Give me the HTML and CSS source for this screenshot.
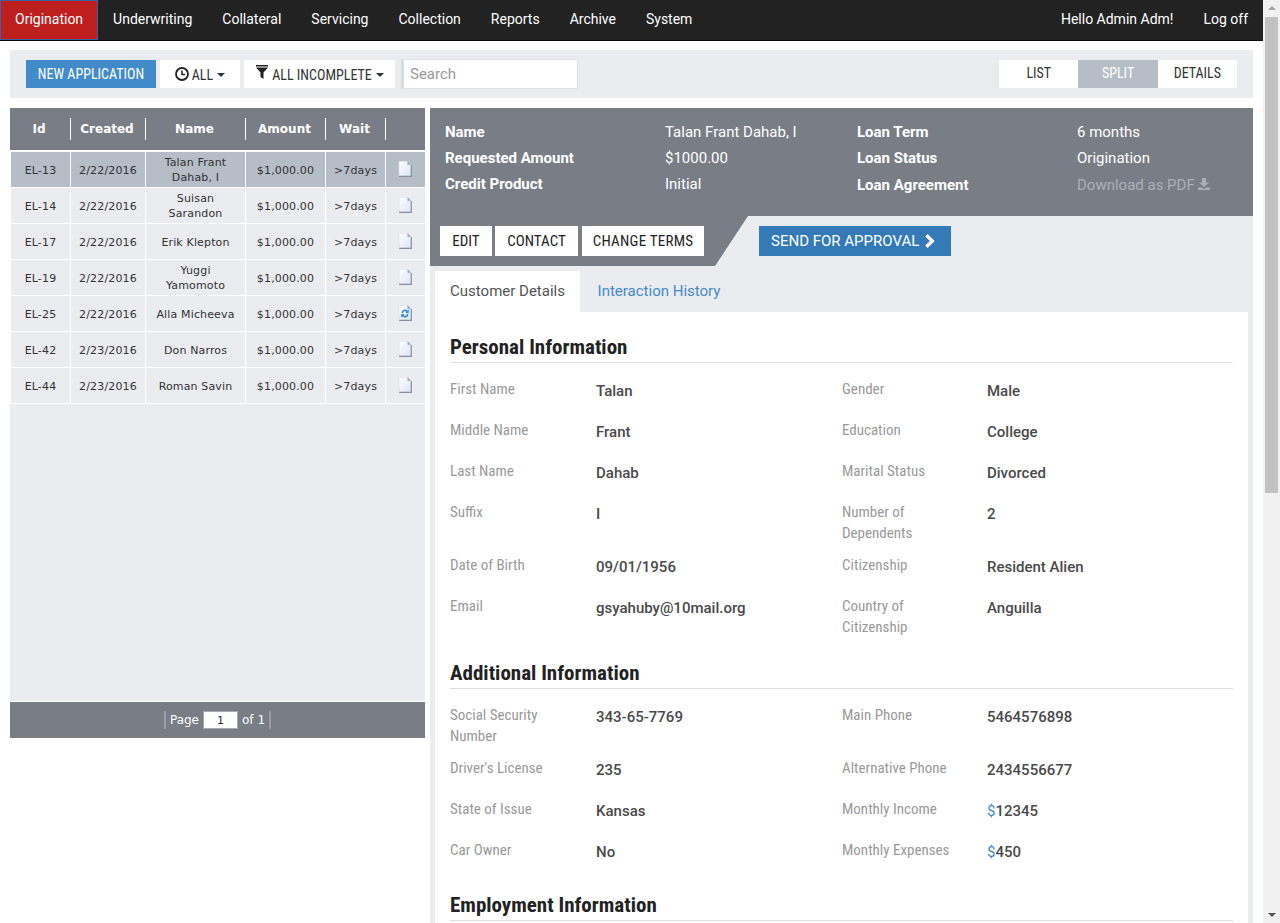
FILE: index.html
```html
<!DOCTYPE html>
<html lang="en">
<head>
<meta charset="utf-8">
<title>Origination</title>
<link rel="stylesheet" href="styles.css">
</head>
<body>
<div class="page">
  <nav class="navbar">
    <ul class="nav-list">
      <li class="nav-item active">Origination</li>
      <li class="nav-item">Underwriting</li>
      <li class="nav-item">Collateral</li>
      <li class="nav-item">Servicing</li>
      <li class="nav-item">Collection</li>
      <li class="nav-item">Reports</li>
      <li class="nav-item">Archive</li>
      <li class="nav-item">System</li>
    </ul>
    <ul class="nav-list">
      <li class="nav-item">Hello Admin Adm!</li>
      <li class="nav-item">Log off</li>
    </ul>
  </nav>
  <div class="toolbar">
    <button class="btn btn-new">NEW APPLICATION</button>
    <button class="btn btn-filter btn-all">
      <svg class="ico-clock" viewBox="0 0 14 14"><circle cx="7" cy="7" r="6" fill="none" stroke="#222" stroke-width="1.8"/><path d="M7 3.5V7.6H10" fill="none" stroke="#222" stroke-width="1.5"/></svg>
      ALL<span class="caret"></span>
    </button>
    <button class="btn btn-filter btn-incomplete">
      <svg class="ico-funnel" viewBox="0 0 12 14"><path d="M0 0H12V1.5H0ZM0 2.5H12L7.5 7.5V14L4.5 12V7.5Z" fill="#222"/></svg>
      ALL INCOMPLETE<span class="caret"></span>
    </button>
    <input class="search" type="text" placeholder="Search">
    <div class="view-switch">
      <span class="view-opt">LIST</span>
      <span class="view-opt current">SPLIT</span>
      <span class="view-opt">DETAILS</span>
    </div>
  </div>
  <div class="columns">
    <section class="list-col">
      <div class="list-body">
        <table class="grid">
          <colgroup><col class="c-id"><col class="c-created"><col class="c-name"><col class="c-amount"><col class="c-wait"><col class="c-icon"></colgroup>
          <thead>
            <tr>
              <th><div>Id</div></th><th><div>Created</div></th><th><div>Name</div></th><th><div>Amount</div></th><th><div>Wait</div></th><th><div></div></th>
            </tr>
          </thead>
          <tbody>
            <tr class="selected"><td>EL-13</td><td>2/22/2016</td><td class="name">Talan Frant Dahab, I</td><td>$1,000.00</td><td>&gt;7days</td><td><svg class="doc" viewBox="0 0 14 16"><use href="#doc-shape"/></svg></td></tr>
            <tr><td>EL-14</td><td>2/22/2016</td><td class="name">Suisan Sarandon</td><td>$1,000.00</td><td>&gt;7days</td><td><svg class="doc" viewBox="0 0 14 16"><use href="#doc-shape"/></svg></td></tr>
            <tr><td>EL-17</td><td>2/22/2016</td><td class="name">Erik Klepton</td><td>$1,000.00</td><td>&gt;7days</td><td><svg class="doc" viewBox="0 0 14 16"><use href="#doc-shape"/></svg></td></tr>
            <tr><td>EL-19</td><td>2/22/2016</td><td class="name">Yuggi Yamomoto</td><td>$1,000.00</td><td>&gt;7days</td><td><svg class="doc" viewBox="0 0 14 16"><use href="#doc-shape"/></svg></td></tr>
            <tr><td>EL-25</td><td>2/22/2016</td><td class="name">Alla Micheeva</td><td>$1,000.00</td><td>&gt;7days</td><td><svg class="doc" viewBox="0 0 14 16"><use href="#doc-shape"/><path d="M3.5 8A3.5 3.5 0 0 1 9.5 5.5L10.8 4.3V8H7.3L8.6 6.800A2.200 2.200 0 0 0 5 8ZM10.5 9A3.5 3.5 0 0 1 4.500 11.500L3.2 12.700V9H6.700L5.400 10.200A2.200 2.200 0 0 0 9 9Z" fill="#3488d8"/></svg></td></tr>
            <tr><td>EL-42</td><td>2/23/2016</td><td class="name">Don Narros</td><td>$1,000.00</td><td>&gt;7days</td><td><svg class="doc" viewBox="0 0 14 16"><use href="#doc-shape"/></svg></td></tr>
            <tr><td>EL-44</td><td>2/23/2016</td><td class="name">Roman Savin</td><td>$1,000.00</td><td>&gt;7days</td><td><svg class="doc" viewBox="0 0 14 16"><use href="#doc-shape"/></svg></td></tr>
          </tbody>
        </table>
      </div>
      <div class="pager">
        <span class="pager-sep"></span>
        <span>Page</span>
        <input class="pager-input" type="text" value="1">
        <span>of 1</span>
        <span class="pager-sep"></span>
      </div>
    </section>
    <section class="detail-col">
      <div class="summary">
        <div class="s-label">Name</div><div class="s-value">Talan Frant Dahab, I</div><div class="s-label">Loan Term</div><div class="s-value">6 months</div>
        <div class="s-label">Requested Amount</div><div class="s-value">$1000.00</div><div class="s-label">Loan Status</div><div class="s-value">Origination</div>
        <div class="s-label">Credit Product</div><div class="s-value">Initial</div><div class="s-label s-low">Loan Agreement</div><div class="s-value s-link s-low">Download as PDF
          <svg class="ico-dl" viewBox="0 0 12 12"><path d="M4 0H8V4.500H11L6 9 1 4.500H4ZM0 9.500H3.500L6 11 8.500 9.500H12V12H0Z" fill="#a9b0ba"/></svg></div>
      </div>
      <div class="actions">
        <button class="btn btn-act btn-edit">EDIT</button>
        <button class="btn btn-act btn-contact">CONTACT</button>
        <button class="btn btn-act btn-terms">CHANGE TERMS</button>
        <button class="btn btn-send">SEND FOR APPROVAL
          <svg class="ico-chev" viewBox="0 0 11 14"><path d="M2.500 1.200L8.300 7 2.500 12.800" fill="none" stroke="#fff" stroke-width="3.400"/></svg></button>
      </div>
      <div class="tabs">
        <span class="tab active">Customer Details</span>
        <span class="tab">Interaction History</span>
      </div>
      <div class="panel">
        <h2 class="section-title first">Personal Information</h2>
        <div class="fields">
          <div class="field"><span class="f-label">First Name</span><span class="f-value">Talan</span></div>
          <div class="field"><span class="f-label">Gender</span><span class="f-value">Male</span></div>
          <div class="field"><span class="f-label">Middle Name</span><span class="f-value">Frant</span></div>
          <div class="field"><span class="f-label">Education</span><span class="f-value">College</span></div>
          <div class="field"><span class="f-label">Last Name</span><span class="f-value">Dahab</span></div>
          <div class="field"><span class="f-label">Marital Status</span><span class="f-value">Divorced</span></div>
          <div class="field"><span class="f-label">Suffix</span><span class="f-value">I</span></div>
          <div class="field"><span class="f-label">Number of Dependents</span><span class="f-value">2</span></div>
          <div class="field"><span class="f-label">Date of Birth</span><span class="f-value">09/01/1956</span></div>
          <div class="field"><span class="f-label">Citizenship</span><span class="f-value">Resident Alien</span></div>
          <div class="field"><span class="f-label">Email</span><span class="f-value">gsyahuby@10mail.org</span></div>
          <div class="field"><span class="f-label">Country of Citizenship</span><span class="f-value">Anguilla</span></div>
        </div>
        <h2 class="section-title">Additional Information</h2>
        <div class="fields">
          <div class="field"><span class="f-label">Social Security Number</span><span class="f-value">343-65-7769</span></div>
          <div class="field"><span class="f-label">Main Phone</span><span class="f-value">5464576898</span></div>
          <div class="field"><span class="f-label">Driver's License</span><span class="f-value">235</span></div>
          <div class="field"><span class="f-label">Alternative Phone</span><span class="f-value">2434556677</span></div>
          <div class="field"><span class="f-label">State of Issue</span><span class="f-value">Kansas</span></div>
          <div class="field"><span class="f-label">Monthly Income</span><span class="f-value"><span class="currency">$</span>12345</span></div>
          <div class="field"><span class="f-label">Car Owner</span><span class="f-value">No</span></div>
          <div class="field"><span class="f-label">Monthly Expenses</span><span class="f-value"><span class="currency">$</span>450</span></div>
        </div>
        <h2 class="section-title">Employment Information</h2>
      </div>
    </section>
  </div>
</div>
<div class="scrollbar">
  <span class="arrow up"></span>
  <span class="thumb"></span>
  <span class="arrow down"></span>
</div>
<svg class="defs" width="0" height="0">
  <defs>
    <linearGradient id="docfill" x1="0" y1="0" x2="1" y2="1"><stop offset="0" stop-color="#ffffff"/><stop offset="1" stop-color="#dbe6f4"/></linearGradient>
    <g id="doc-shape"><path d="M1 .2H9.500L13 3.700V15H1Z" fill="url(#docfill)" stroke="#d5dde8" stroke-width=".6"/><path d="M9.500 .2L13 3.700H9.500Z" fill="#8fa3be"/><path d="M13.300 4V15.400H1" fill="none" stroke="#8392a8" stroke-width="1.200"/></g>
  </defs>
</svg>
</body>
</html>
```
FILE: styles.css
```css
* { box-sizing: border-box; }
html, body { margin: 0; height: 923px; overflow: hidden; background: #fff; }
body { font-family: Roboto, "Liberation Sans", sans-serif; font-size: 14px; color: #333; position: relative; }
ul { list-style: none; margin: 0; padding: 0; }
button { font: inherit; border: 0; margin: 0; padding: 0; }
.page { width: 1263px; }

.navbar { height: 41px; background: #222; border-bottom: 1px solid #080808; display: flex; justify-content: space-between; }
.nav-list { display: flex; }
.nav-item { padding: 0 15px; line-height: 39px; color: #fff; font-size: 14px; font-weight: 400; height: 40px; }
.nav-item.active { background: #bd1e1e; box-shadow: inset 0 0 0 1px #41609f; }

.btn, .f-label, .view-opt, .section-title { font-family: "Roboto Condensed", "Liberation Sans Narrow", Roboto, sans-serif; font-stretch: 75%; }

.toolbar { margin: 9px 10px 0; height: 48px; background: #ebecf0; display: flex; align-items: center; padding: 0 16px; position: relative; }
.btn { height: 28px; font-size: 14px; display: inline-flex; align-items: center; justify-content: center; cursor: pointer; }
.btn-new { width: 130px; background: #428bca; color: #fff; }
.btn-filter { background: #fff; color: #333; margin-left: 4px; height: 28px; padding-top: 2px; }
.btn-all { width: 80px; }
.btn-incomplete { width: 151px; }
.ico-clock { width: 14px; height: 14px; margin-right: 3px; margin-top: -2px; }
.ico-funnel { width: 12px; height: 14px; margin-right: 4px; margin-top: -6px; margin-left: 1px; }
.caret { width: 0; height: 0; border-left: 4px solid transparent; border-right: 4px solid transparent; border-top: 4px solid #333; margin-left: 4px; }
.search { width: 177px; height: 30px; margin-left: 6px; border: 1px solid #dde2ea; border-left: 3px solid #d5dde8; padding: 0 6px; font: 15px Roboto, sans-serif; color: #333; background: #fff; outline: 0; }
.search::placeholder { color: #999; opacity: 1; }
.view-switch { margin-left: auto; display: flex; height: 28px; background: #fff; }
.view-opt { width: 79.300px; display: flex; align-items: center; justify-content: center; color: #333; padding-bottom: 2px; }
.view-opt.current { background: #b5bdc7; color: #fff; }

.columns { display: flex; margin: 10px 10px 0; gap: 5px; align-items: flex-start; }
.list-col { width: 415px; flex: none; }
.list-body { height: 594px; background: #ebecf0; border-bottom: 1px solid #fff; }
.grid { width: 415px; border-collapse: separate; border-spacing: 0; table-layout: fixed; font-family: Verdana, "DejaVu Sans", sans-serif; font-size: 11px; letter-spacing: .15px; color: #333; }
.c-id { width: 60px; } .c-created { width: 75px; } .c-name { width: 100px; } .c-amount { width: 80px; } .c-wait { width: 60px; } .c-icon { width: 40px; }
.grid th { height: 44px; padding: 10px 0; background: #797d85; color: #fff; font-size: 12px; font-weight: 700; letter-spacing: 0; border-bottom: 2px solid #fff; background-clip: padding-box; vertical-align: top; }
.grid th div { height: 22px; line-height: 22px; padding-right: 2px; }
.grid th + th div { border-left: 1px solid #fff; }
.grid td { height: 36px; padding: 1px 7px 0; text-align: center; line-height: 15px; border-left: 1px solid #fff; border-bottom: 1px solid #fff; }
.grid td:not(.name) { padding-left: 0; padding-right: 0; }
.grid tr.selected td { background: #b5bdc7; }
.doc { width: 14px; height: 16px; display: block; margin: -2px auto 0; position: relative; left: -1px; }
.pager { height: 36px; background: #797d85; color: #fff; display: flex; align-items: center; justify-content: center; font-family: Verdana, "DejaVu Sans", sans-serif; font-size: 12px; gap: 4px; }
.pager-sep { width: 2px; height: 18px; background: #9a9da3; }
.pager-input { width: 35px; height: 18px; border: 1px solid #aaa; text-align: center; padding: 0; font: 11px "DejaVu Sans", sans-serif; color: #1c2a55; background: #fff; }

.detail-col { width: 823px; background: #ebecf0; height: 815px; display: flex; flex-direction: column; }
.summary { height: 108px; background: #797d85; color: #fff; padding: 11px 15px 0; display: grid; grid-template-columns: 220px 192px 220px 1fr; grid-auto-rows: 26px; align-items: center; font-size: 15px; }
.s-label { font-weight: 700; }
.s-low { padding-top: 1px; }
.s-link { color: #a9b0ba; }
.ico-dl { width: 12px; height: 12px; }
.actions { height: 50px; display: flex; align-items: center; padding: 0 0 0 10px; background: linear-gradient(to right, #797d85 285px, transparent 285px); position: relative; }
.actions::after { content: ""; position: absolute; left: 285px; top: 0; width: 33px; height: 50px; background: #797d85; clip-path: polygon(0 0, 100% 0, 0 100%); }
.btn-act { height: 30px; background: #fff; color: #222; font-size: 15px; }
.btn-edit { width: 52px; }
.btn-contact { width: 83px; margin-left: 3px; }
.btn-terms { width: 122px; margin-left: 4px; letter-spacing: .25px; }
.btn-send { width: 192px; height: 30px; margin-left: 55px; padding-left: 12px; justify-content: flex-start; background: #337ab7; color: #fff; font-family: Roboto, sans-serif; font-stretch: normal; font-size: 15px; position: relative; z-index: 1; gap: 5px; }
.ico-chev { width: 11px; height: 14px; }
.tabs { display: flex; height: 41px; margin: 5px 5px 0; font-size: 15px; }
.tab { width: 145px; line-height: 40px; text-align: center; color: #428bca; }
.tab.active { background: #fff; color: #555; }
.tab + .tab { width: 158px; }
.panel { flex: 1; margin: 0 5px; background: #fff; padding: 0 15px; overflow: hidden; }
.section-title { margin: 5px 0 16px; height: 35px; line-height: 39px; border-bottom: 1px solid #ddd; font-size: 21px; font-weight: 700; color: #222; }
.section-title.first { margin-top: 16px; }
.fields { display: grid; grid-template-columns: 392px 1fr; }
.field { display: grid; grid-template-columns: 146px 1fr; min-height: 41px; padding-bottom: 11px; align-items: start; }
.field:nth-child(even) { grid-template-columns: 145px 1fr; }
.f-label { color: #999; font-size: 15px; line-height: 21px; padding-right: 30px; }
.f-value { font-size: 15px; font-weight: 500; color: #4a4a4a; line-height: 21px; padding-top: 2px; }
.currency { color: #428bca; font-weight: 400; }

.scrollbar { position: absolute; left: 1263px; top: 0; width: 17px; height: 923px; background: #f1f1f1; }
.thumb { position: absolute; left: 2px; top: 17px; width: 13px; height: 476px; background: #c1c1c1; }
.arrow { position: absolute; left: 5px; width: 0; height: 0; border-left: 4px solid transparent; border-right: 4px solid transparent; }
.arrow.up { top: 6px; border-bottom: 4px solid #a3a3a3; }
.arrow.down { bottom: 6px; border-top: 4px solid #505050; }
.defs { position: absolute; }
```
